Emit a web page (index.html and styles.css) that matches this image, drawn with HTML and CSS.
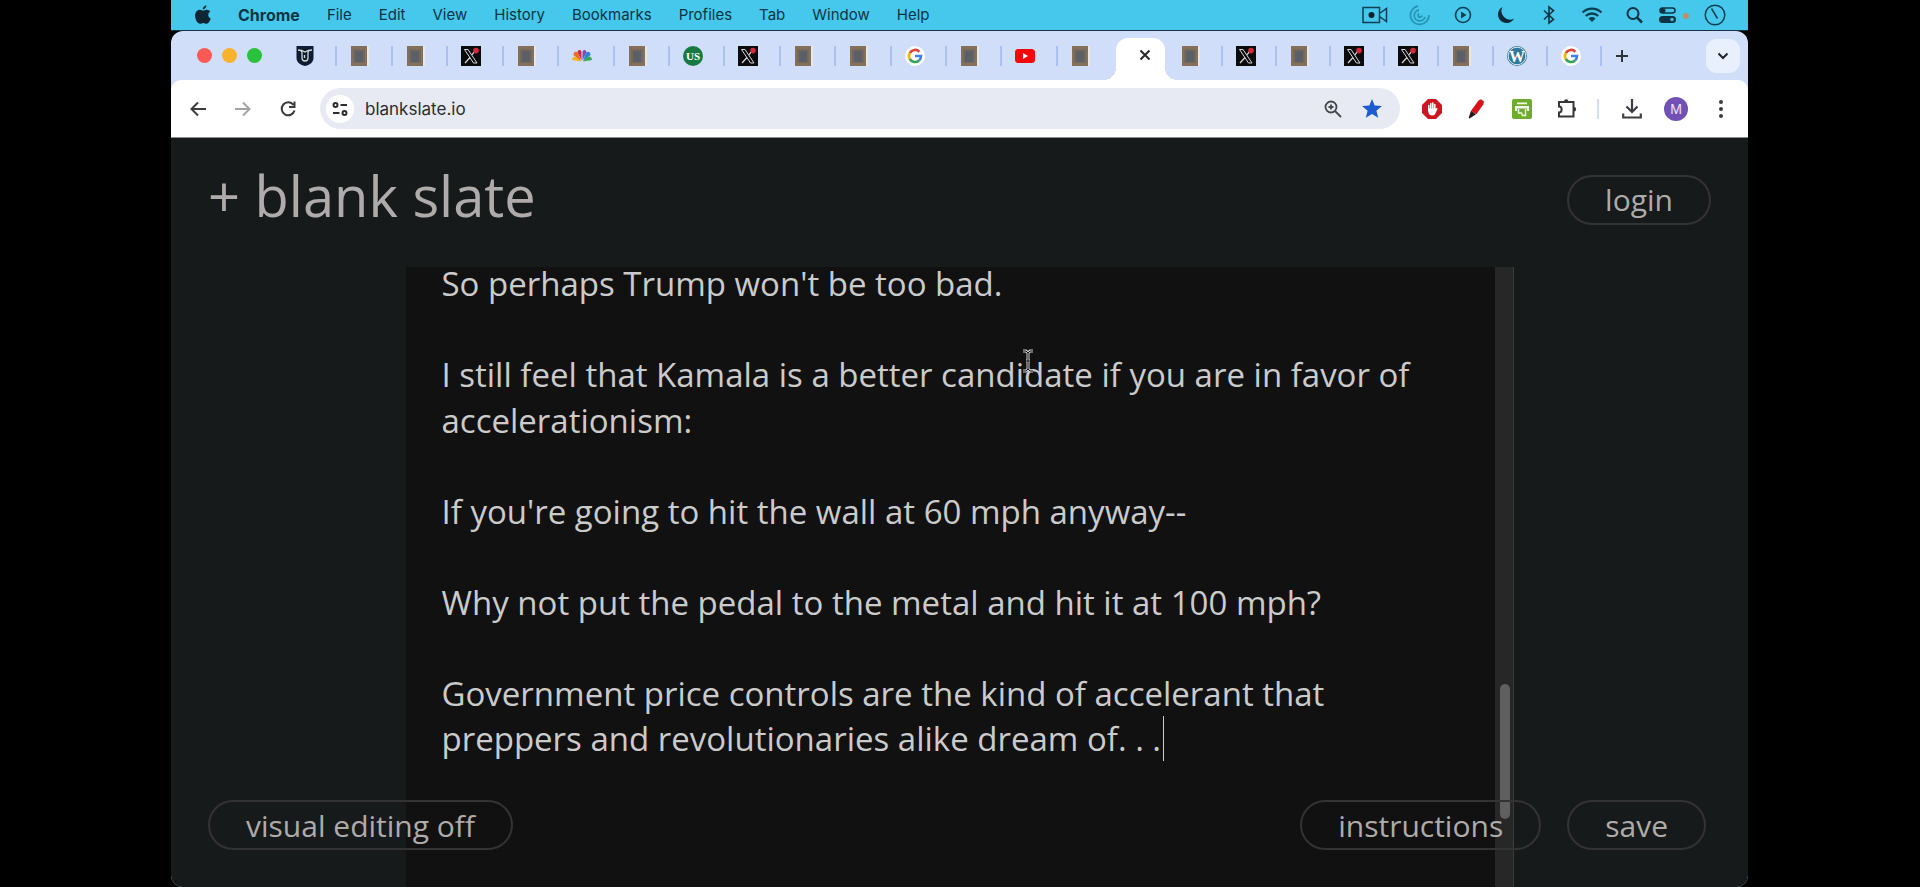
FILE: index.html
```html
<!DOCTYPE html>
<html lang="en">
<head>
    <meta charset="UTF-8">
    <meta name="viewport" content="width=device-width, initial-scale=1.0">
    <title>blank slate</title>
    <link rel="stylesheet" href="styles.css">
</head>
<body>
    <!-- shared icons -->
    <svg class="sprite" aria-hidden="true">
        <symbol id="x-logo" viewBox="0 0 20 20">
            <rect width="20" height="20" fill="#0b0b0d"/>
            <path d="M3.500 3.500h3.500l9 13.500h-3.500z" fill="none" stroke="#d8d8d8" stroke-width="1"/>
            <path d="M15 4L10.800 8.800M9 11.500L4 17" stroke="#d8d8d8" stroke-width="1.200"/>
            <circle cx="15" cy="4.600" r="2.800" fill="#d5283c"/>
        </symbol>
        <symbol id="brick" viewBox="0 0 20 20">
            <rect x="1" width="18" height="20" fill="#e9e6e4"/>
            <rect x="1" width="16" height="20" fill="#85705a"/>
            <rect x="3" y="3" width="12" height="14" fill="#74685c"/>
            <rect x="5" y="5" width="8" height="11" fill="#5b6066"/>
        </symbol>
        <symbol id="google" viewBox="0 0 20 20">
            <circle cx="10" cy="10" r="10" fill="#fff"/>
            <g fill="none" stroke-width="2.600">
                <path d="M14.400 5.800A6 6 0 0 0 4.800 7" stroke="#e34133"/>
                <path d="M4.800 7a6 6 0 0 0 0 6" stroke="#f3b605"/>
                <path d="M4.800 13a6 6 0 0 0 9.200 1.500" stroke="#32a350"/>
                <path d="M14 14.500A6 6 0 0 0 16 10h-6" stroke="#4080ee"/>
            </g>
        </symbol>
    </svg>

    <div class="screen">
        <header class="menubar">
            <nav class="menus">
                <svg class="apple" width="16" height="20" viewBox="0 0 16 20"><path d="M11.3.3c.2 2-1.600 4.200-3.500 4.100C7.500 2.500 9.400.5 11.300.3zM8.200 5.700c.8 0 1.900-1.100 3.700-1 1.400.1 2.600.7 3.300 1.800-2.900 1.900-2.400 5.800.6 7-.8 2.200-2.400 5.200-4.200 5.200-1.300 0-1.800-.8-3.300-.8s-2 .8-3.200.8C2.600 18.800.1 14.500.1 10.700c0-3.700 2.300-5.900 4.600-5.900 1.500 0 2.700.9 3.500.9z" fill="#0c2733"/></svg>
                <b>Chrome</b>
                <span>File</span>
                <span>Edit</span>
                <span>View</span>
                <span>History</span>
                <span>Bookmarks</span>
                <span>Profiles</span>
                <span>Tab</span>
                <span>Window</span>
                <span>Help</span>
            </nav>
            <div class="status">
                <svg width="26" height="22" viewBox="0 0 26 22" fill="none" stroke="#0c3f52" stroke-width="1.500"><path d="M1 3.500h16.500v15H1zM17.500 9.500l7-5v13l-7-5"/><circle cx="9.500" cy="11" r="3" fill="#08232e" stroke="none"/></svg>
                <svg width="22" height="22" viewBox="0 0 22 22" fill="none" stroke="#2796b5" stroke-width="1.800"><path d="M9 2a9.300 9.300 0 1 0 11 9M10 6a5.500 5.500 0 1 0 6 7M10 9.500a2 2 0 1 0 3 2"/></svg>
                <svg width="22" height="22" viewBox="0 0 22 22" fill="none" stroke="#0c3f52" stroke-width="1.600"><circle cx="11" cy="11" r="7.500"/><path d="M9 7.500v7l5.500-3.500z" fill="#0c3f52" stroke="none"/></svg>
                <svg width="22" height="22" viewBox="0 0 22 22"><path d="M7.500 3A8.500 8.500 0 1 0 19 14.500 8.500 8.500 0 0 1 7.500 3z" fill="#08293a"/></svg>
                <svg width="22" height="22" viewBox="0 0 22 22" fill="none" stroke="#0c3444" stroke-width="1.600"><path d="M6 6.500l9.500 9-4.500 3.500V3l4.500 3.500-9.500 9"/></svg>
                <svg width="22" height="22" viewBox="0 0 22 22" fill="none" stroke="#0c3f52" stroke-width="2.400"><path d="M1.500 8.500a13.500 13.500 0 0 1 19 0M4.800 12a8.800 8.800 0 0 1 12.400 0"/><path d="M11 18l-3.500-3.600a5 5 0 0 1 7 0z" fill="#0c3f52" stroke="none"/></svg>
                <svg width="20" height="22" viewBox="0 0 20 22" fill="none" stroke="#0c3444" stroke-width="2"><circle cx="9" cy="9.500" r="5.500"/><path d="M13 13.500l5 5" stroke-width="2.500"/></svg>
                <svg class="control-center" width="30" height="22" viewBox="4 0 30 22"><rect x="5" y="4" width="15" height="5" rx="2.500" fill="none" stroke="#0c3444" stroke-width="1.500"/><circle cx="8" cy="6.500" r="2.500" fill="#0c3444"/><rect x="4" y="12" width="17" height="7" rx="3.500" fill="#0c3444"/><circle cx="17" cy="15.500" r="1.800" fill="#49b9d6"/><circle cx="31" cy="12" r="3" fill="#bf9068"/></svg>
                <svg width="22" height="22" viewBox="0 0 22 22" fill="none" stroke="#0c3f52" stroke-width="1.500"><circle cx="11" cy="11" r="9.800"/><path d="M7.500 4.500l6 10"/></svg>
            </div>
        </header>

        <div class="window">
            <div class="tabstrip">
                <div class="lights">
                    <button class="light close" aria-label="Close"></button>
                    <button class="light minimize" aria-label="Minimize"></button>
                    <button class="light zoom" aria-label="Zoom"></button>
                </div>
                <div class="tabs">
                    <div class="tab-group before">
                        <button class="tab" aria-label="Tab"><svg viewBox="0 0 20 20"><path d="M1.500 0h17v12c0 4-3.500 7-8.500 8-5-1-8.500-4-8.500-8z" fill="#0f1b33"/><path d="M3 4c3 0 4 1 4 3v5c0 4 6 4 6 0V7c0-2 1-3 4-3M6 4l4 2 4-2M9.500 9v3" fill="none" stroke="#cfdccf" stroke-width="1.300"/></svg></button>
                        <button class="tab" aria-label="Tab"><svg><use href="#brick"/></svg></button>
                        <button class="tab" aria-label="Tab"><svg><use href="#brick"/></svg></button>
                        <button class="tab" aria-label="Tab"><svg><use href="#x-logo"/></svg></button>
                        <button class="tab" aria-label="Tab"><svg><use href="#brick"/></svg></button>
                        <button class="tab" aria-label="Tab"><svg viewBox="0 0 20 20"><path d="M9 15.500L0 14c0-3 3-4.500 5-2.500z" fill="#f3b51b"/><path d="M9 15L1.500 9c0-4 4-4 5-1z" fill="#ee6a23"/><path d="M9.500 14.500L5.500 6c1-3 4-2 4 0z" fill="#d3264f"/><path d="M10.500 14.500V6c0-2 3-3 4 0z" fill="#7b4fb5"/><path d="M11 15l2.500-7c1-3 5-3 5 1z" fill="#2e82d2"/><path d="M11 15.500l4-4c2-2 5-.5 5 2.500z" fill="#32ad4b"/></svg></button>
                        <button class="tab" aria-label="Tab"><svg><use href="#brick"/></svg></button>
                        <button class="tab" aria-label="Tab"><svg viewBox="0 0 20 20"><circle cx="10" cy="10" r="10" fill="#187a40"/><text x="10" y="14" text-anchor="middle" class="us">US</text></svg></button>
                        <button class="tab" aria-label="Tab"><svg><use href="#x-logo"/></svg></button>
                        <button class="tab" aria-label="Tab"><svg><use href="#brick"/></svg></button>
                        <button class="tab" aria-label="Tab"><svg><use href="#brick"/></svg></button>
                        <button class="tab" aria-label="Tab"><svg><use href="#google"/></svg></button>
                        <button class="tab" aria-label="Tab"><svg><use href="#brick"/></svg></button>
                        <button class="tab" aria-label="Tab"><svg viewBox="0 0 20 20"><rect y="3" width="20" height="14" rx="3.500" fill="#f90606"/><path d="M8 7v6l5-3z" fill="#fff"/></svg></button>
                        <button class="tab" aria-label="Tab"><svg><use href="#brick"/></svg></button>
                    </div>
                    <div class="active-tab">
                        <button class="close-tab" aria-label="Close tab"><svg width="12" height="12" viewBox="0 0 12 12"><path d="M1.500 1.500l9 9M10.500 1.500l-9 9" stroke="#26282b" stroke-width="2"/></svg></button>
                    </div>
                    <div class="tab-group after">
                        <button class="tab" aria-label="Tab"><svg><use href="#brick"/></svg></button>
                        <button class="tab" aria-label="Tab"><svg><use href="#x-logo"/></svg></button>
                        <button class="tab" aria-label="Tab"><svg><use href="#brick"/></svg></button>
                        <button class="tab" aria-label="Tab"><svg><use href="#x-logo"/></svg></button>
                        <button class="tab" aria-label="Tab"><svg><use href="#x-logo"/></svg></button>
                        <button class="tab" aria-label="Tab"><svg><use href="#brick"/></svg></button>
                        <button class="tab" aria-label="Tab"><svg viewBox="0 0 20 20"><circle cx="10" cy="10" r="10" fill="#2f779b"/><circle cx="10" cy="10" r="8.800" fill="none" stroke="#dce9ef" stroke-width="1"/><text x="10" y="16" text-anchor="middle" class="wp">W</text></svg></button>
                        <button class="tab" aria-label="Tab"><svg><use href="#google"/></svg></button>
                    </div>
                </div>
                <button class="new-tab" aria-label="New tab"><svg width="14" height="14" viewBox="0 0 14 14"><path d="M7 1v12M1 7h12" stroke="#303338" stroke-width="2"/></svg></button>
                <button class="tab-search" aria-label="Search tabs"><svg width="12" height="8" viewBox="0 0 12 8"><path d="M1.500 1.500L6 6l4.500-4.500" fill="none" stroke="#1f2226" stroke-width="2"/></svg></button>
            </div>

            <div class="toolbar">
                <div class="nav-buttons">
                    <button aria-label="Back"><svg width="18" height="18" viewBox="0 0 18 18" fill="none" stroke="#3b3c3f" stroke-width="2"><path d="M17 9H3M9 2.500L2.500 9 9 15.500"/></svg></button>
                    <button aria-label="Forward"><svg width="18" height="18" viewBox="0 0 18 18" fill="none" stroke="#a3a4a6" stroke-width="2"><path d="M1 9h14M9 2.500L15.500 9 9 15.500"/></svg></button>
                    <button aria-label="Reload"><svg width="18" height="18" viewBox="0 0 18 18" fill="none" stroke="#3b3c3f" stroke-width="2"><path d="M15.500 10.500A6.500 6.500 0 1 1 14.500 5M15.500 1.500v5.500H10"/></svg></button>
                </div>
                <div class="omnibox">
                    <button class="site-info" aria-label="Site information"><svg width="16" height="16" viewBox="0 0 16 16" fill="none" stroke="#2c2e31" stroke-width="2"><circle cx="3.500" cy="4" r="2"/><path d="M8.500 4H15M1 12h6.500"/><circle cx="12.500" cy="12" r="2"/></svg></button>
                    <input type="text" aria-label="Address" value="blankslate.io">
                    <button aria-label="Zoom"><svg width="18" height="18" viewBox="0 0 18 18" fill="none" stroke="#45474b" stroke-width="1.800"><circle cx="7" cy="7" r="5.500"/><path d="M11 11l6 6M7 4.500v5M4.500 7h5"/></svg></button>
                    <button aria-label="Bookmark this tab"><svg width="20" height="19" viewBox="0 0 20 19"><path d="M10 0l2.700 6.600 7.300.5-5.600 4.600 1.800 7L10 14.900l-6.200 3.800 1.800-7L0 7.100l7.300-.5z" fill="#1d5bd0"/></svg></button>
                </div>
                <div class="extensions">
                    <button aria-label="Ad blocker"><svg width="20" height="20" viewBox="0 0 20 20"><path d="M6 0h8l6 6v8l-6 6H6l-6-6V6z" fill="#cc1620"/><path d="M6.800 11V6.500M8.800 10V4.500M10.800 10V4M12.800 11V5.500" stroke="#fff" stroke-width="1.500" stroke-linecap="round"/><path d="M6 9.500h7.600l1.400-.5c.8 0 .6 1-.2 2.500l-2 4c-1 1.300-4.800 1.300-5.600-.5-.8-1.400-1.200-2.800-1.200-5.500z" fill="#fff"/></svg></button>
                    <button aria-label="Highlighter"><svg width="20" height="20" viewBox="0 0 20 20"><path d="M11.500 1.500L14 .3l3 2.200-.7 3-7 9.800-5.300-3.500z" fill="#d8131b"/><path d="M4 11.800l5 3.500-6.500 4.200-.9-.6z" fill="#2b1819"/></svg></button>
                    <button aria-label="Print friendly"><svg width="20" height="20" viewBox="0 0 20 20"><rect width="20" height="20" rx="2" fill="#70ac2c"/><path d="M5 4.300h10" stroke="#f1f7e8" stroke-width="1.800"/><path d="M3 7h14v5h-2V9.500H5V12H3z" fill="#f1f7e8"/><path d="M6.500 10v4h3l1 2.500h3V10" fill="none" stroke="#f1f7e8" stroke-width="1.400"/></svg></button>
                    <button aria-label="Extensions"><svg width="20" height="20" viewBox="0 0 20 20" fill="none" stroke="#343639" stroke-width="2"><path d="M2 3h14.500v14.500H2v-4c3.500 0 3.500-6 0-6z"/><path d="M7 2.500a2.200 2.200 0 0 1 4.400 0M17 8a2.200 2.200 0 0 1 0 4.400z" fill="#343639" stroke="none"/></svg></button>
                </div>
                <div class="profile">
                    <button aria-label="Downloads"><svg width="20" height="20" viewBox="0 0 20 20" fill="none" stroke="#3c3d40" stroke-width="2.200"><path d="M10 0v12M4.500 7.500L10 13l5.500-5.500M1.200 14.500v4h17.600v-4"/></svg></button>
                    <button class="avatar" aria-label="Profile">M</button>
                    <button aria-label="Menu"><svg width="4" height="18" viewBox="0 0 4 18" fill="#3c3d40"><circle cx="2" cy="2" r="2"/><circle cx="2" cy="9" r="2"/><circle cx="2" cy="16" r="2"/></svg></button>
                </div>
            </div>

            <main class="page">
                <div class="page-header">
                    <h1><a href="#">+ blank slate</a></h1>
                    <button class="pill">login</button>
                </div>
                <div class="editor">
                    <textarea aria-label="Document" spellcheck="false">So perhaps Trump won't be too bad.

I still feel that Kamala is a better candidate if you are in favor of accelerationism:

If you're going to hit the wall at 60 mph anyway--

Why not put the pedal to the metal and hit it at 100 mph?

Government price controls are the kind of accelerant that preppers and revolutionaries alike dream of. . .</textarea>
                    <div class="scrollbar"><div class="thumb"></div></div>
                    <div class="caret"></div>
                    <svg class="pointer" width="12" height="24" viewBox="0 0 12 24" fill="none"><path d="M1 2h3l2 2 2-2h3M6 4v16M4 12h4M1 22h3l2-2 2 2h3" stroke="#c9c9c9" stroke-width="3"/><path d="M1 2h3l2 2 2-2h3M6 4v16M4 12h4M1 22h3l2-2 2 2h3" stroke="#111" stroke-width="1"/></svg>
                </div>
                <div class="page-footer">
                    <button class="pill">visual editing off</button>
                    <div class="footer-right">
                        <button class="pill">instructions</button>
                        <button class="pill">save</button>
                    </div>
                </div>
            </main>
        </div>
    </div>
</body>
</html>
```
FILE: styles.css
```css
* {
    box-sizing: border-box;
}
body {
    margin: 0;
    background-color: #000;
    font-family: Inter, "Liberation Sans", sans-serif;
}
button {
    display: flex;
    align-items: center;
    justify-content: center;
    margin: 0;
    padding: 0;
    border: none;
    background: none;
    font-family: inherit;
}
.sprite {
    display: none;
}
.screen {
    display: flex;
    flex-direction: column;
    height: 100vh;
    margin: 0 172px 0 171px;
}

/* menu bar */
.menubar {
    display: flex;
    justify-content: space-between;
    align-items: center;
    height: 31px;
    padding: 0 22px 1px 24px;
    border-bottom: 1px solid #123440;
    background-color: #45c8ec;
    color: #0c3444;
    font-size: 15px;
}
.menus {
    display: flex;
    align-items: center;
    gap: 27px;
}
.menus b {
    font-size: 16px;
}
.status {
    display: flex;
    align-items: center;
    gap: 21px;
}
.control-center {
    margin: 0 -6px;
}

/* browser window */
.window {
    display: flex;
    flex-direction: column;
    flex: 1;
    min-height: 0;
    overflow: hidden;
    border-radius: 12px;
    background-color: #d0defa;
}
.tabstrip {
    display: flex;
    align-items: center;
    height: 49px;
    padding: 0 8px 0 26px;
}
.lights {
    display: flex;
    gap: 10px;
    width: 85px;
}
.light {
    width: 15px;
    height: 15px;
    border-radius: 50%;
}
.close {
    background-color: #fb5953;
}
.minimize {
    background-color: #f9b22d;
}
.zoom {
    background-color: #2ac23c;
}
.tabs {
    display: flex;
    flex: 1;
    height: 100%;
}
.tab-group {
    display: flex;
    align-items: center;
}
.before {
    flex: 23;
}
.after {
    flex: 12;
}
.tab {
    flex: 1;
    justify-content: flex-start;
    height: 20px;
    padding-left: 13px;
    border-right: 2px solid #a9c2f2;
}
.before .tab:last-child {
    border-color: transparent;
}
.tab svg {
    width: 20px;
    height: 20px;
    flex: none;
}
.us {
    font: bold 11px "Liberation Serif", serif;
    fill: #fff;
}
.wp {
    font: bold 16px "Liberation Serif", serif;
    fill: #fff;
}
.active-tab {
    position: relative;
    display: flex;
    align-items: center;
    justify-content: center;
    width: 49px;
    margin: 7px 3px 0;
    padding: 0 0 8px 8px;
    border-radius: 12px 12px 0 0;
    background-color: #fff;
}
/* flared feet of the active tab */
.active-tab::before,
.active-tab::after {
    content: "";
    position: absolute;
    bottom: 0;
    width: 12px;
    height: 12px;
}
.active-tab::before {
    right: 100%;
    background: radial-gradient(circle at 0 0, transparent 12px, #fff 12px);
}
.active-tab::after {
    left: 100%;
    background: radial-gradient(circle at 100% 0, transparent 12px, #fff 12px);
}
.new-tab {
    width: 40px;
    height: 34px;
}
.tab-search {
    width: 34px;
    height: 34px;
    margin-left: 64px;
    border-radius: 11px;
    background-color: #e9f0fd;
}

/* toolbar */
.toolbar {
    display: flex;
    align-items: center;
    height: 58px;
    padding: 0 16px 0 18px;
    border-bottom: 1px solid #8a8c8d;
    border-radius: 10px 10px 0 0;
    background-color: #fff;
}
.nav-buttons {
    display: flex;
    gap: 27px;
    width: 131px;
}
.omnibox {
    display: flex;
    align-items: center;
    flex: 1;
    gap: 20px;
    height: 41px;
    padding: 0 18px 0 6px;
    border-radius: 21px;
    background-color: #e7eaf2;
}
.omnibox input {
    flex: 1;
    min-width: 0;
    margin-left: -9px;
    padding: 0;
    border: none;
    outline: none;
    background: none;
    color: #2b2d30;
    font-family: inherit;
    font-size: 17px;
}
.site-info {
    width: 28px;
    height: 28px;
    border-radius: 50%;
    background-color: #fff;
}
.extensions {
    display: flex;
    gap: 25px;
    padding: 0 20px 0 22px;
    border-right: 2px solid #d3dff5;
}
.profile {
    display: flex;
    align-items: center;
    gap: 22px;
    padding-left: 23px;
}
.profile button:last-child {
    width: 22px;
}
.avatar {
    width: 24px;
    height: 24px;
    border-radius: 50%;
    background-color: #7151b4;
    color: #e9e2f5;
    font-size: 13px;
}

/* page */
.page {
    position: relative;
    display: flex;
    flex-direction: column;
    flex: 1;
    min-height: 0;
    background-color: #171a1b;
    color: #aeabaa;
    font-family: "Open Sans", "Noto Sans", sans-serif;
}
.page-header {
    display: flex;
    justify-content: space-between;
    align-items: center;
    height: 129px;
    padding: 0 37px 6px;
}
h1 {
    margin: 0;
    padding-bottom: 10px;
    font-size: 56px;
    font-weight: normal;
}
h1 a {
    color: inherit;
    text-decoration: none;
}
.pill {
    height: 50px;
    padding: 0 36px;
    border: 2px solid #343334;
    border-radius: 25px;
    color: #aeabaa;
    font-size: 30px;
}
.editor {
    position: relative;
    display: flex;
    flex: 1;
    width: 1108px;
    max-width: 100%;
    min-height: 0;
    margin: 0 auto;
    overflow: hidden;
    background-color: #111;
}
textarea {
    flex: 1;
    min-width: 0;
    margin-top: -6px;
    padding: 0 36px;
    border: none;
    outline: none;
    overflow: hidden;
    resize: none;
    background: none;
    color: #cbcbcb;
    font-family: inherit;
    font-size: 33px;
    line-height: 1.38;
}
.scrollbar {
    width: 19px;
    padding: 417px 3px 0 5px;
    border-right: 1px solid #3c3c3c;
    background-color: #272727;
}
.thumb {
    height: 135px;
    border-radius: 5px;
    background-color: #5f5f5f;
}
.caret {
    position: absolute;
    left: 757px;
    top: 449px;
    width: 1px;
    height: 45px;
    background-color: #cbcbcb;
}
.pointer {
    position: absolute;
    left: 616px;
    top: 82px;
}
.page-footer {
    position: absolute;
    right: 42px;
    bottom: 37px;
    left: 37px;
    display: flex;
    justify-content: space-between;
}
.footer-right {
    display: flex;
    gap: 26px;
}
```
